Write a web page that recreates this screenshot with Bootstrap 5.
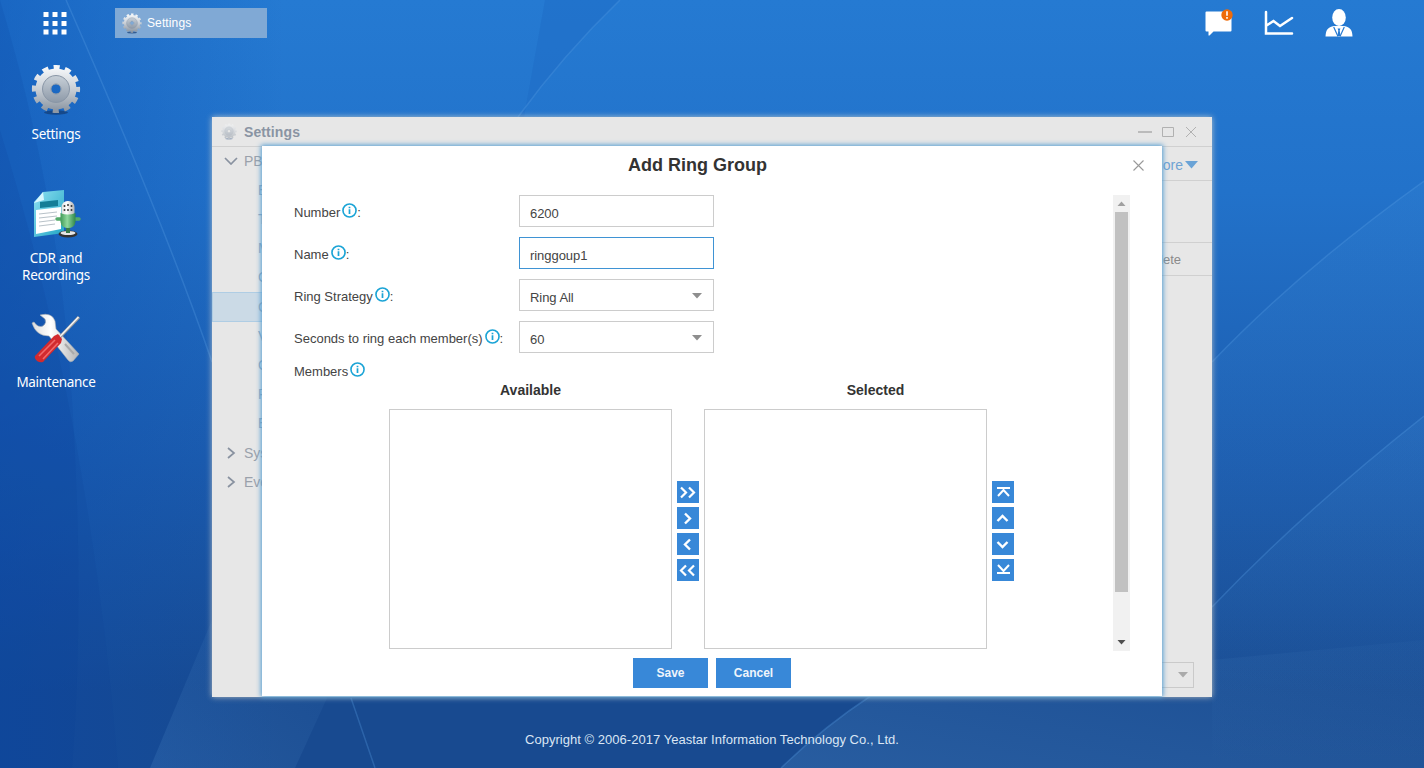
<!DOCTYPE html>
<html lang="en">
<head>
<meta charset="utf-8">
<title>Yeastar Settings</title>
<link href="https://cdn.jsdelivr.net/npm/bootstrap@5.3.0/dist/css/bootstrap.min.css" rel="stylesheet">
<script src="https://cdn.jsdelivr.net/npm/bootstrap@5.3.0/dist/js/bootstrap.bundle.min.js" defer></script>
<style>
body{font-family:"Liberation Sans",Arial,sans-serif;font-size:13px;line-height:20px;color:#444;background:#1c5fb4;width:1424px;height:768px}
.wallpaper{left:0;top:0;width:1424px;height:768px;z-index:-1}
.topbar{height:46px}
.apps-btn{margin-left:43px;width:25px;height:46px}
.task-btn{margin-left:47px;width:152px;height:30px;background:#80a9d5;color:#fff;padding-left:7px;gap:5px;font-size:12px;letter-spacing:.12px}
.tray{margin-right:70px;gap:30px}
.desk-icons{width:112px;margin-top:18px}
.desk-item{height:124px;color:#fff;font-family:"Noto Sans",sans-serif;font-size:13.5px;line-height:17px;letter-spacing:-.3px}
.desk-item svg{margin-bottom:10px}
.app-win{left:212px;top:117px;width:1000px;height:580px;background:#e7e7e7;box-shadow:0 0 6px rgba(225,220,205,.75);color:#9aa1ab}
.win-head{height:30px;border-bottom:1px solid #d0d0d0;padding:0 14px 0 9px}
.win-title{font-size:14px;font-weight:700;color:#8a94a3;letter-spacing:.1px}
.win-icon{margin-right:7px}
.side{width:182px;font-size:14px}
.side-row{height:29px;padding-left:12px;gap:6px}
.side-row.open{padding-bottom:2px}
.side-sub{height:29px;padding-left:46px;line-height:29px;color:#93a9bd}
.side-sub.on{height:30px;background:#cbdae6;border:1px solid #afcde4;padding-left:45px}
.pane{height:550px}
.pane-tools{height:34px;border-bottom:1px solid #d0d0d0;padding:2px 14px 0 0;font-size:14px;color:#6fa3d4;gap:2px}
.pane-gap{height:62px;border-bottom:1px solid #d0d0d0}
.pane-cols{height:33px;border-bottom:1px solid #d0d0d0;padding:2px 31px 0 0;color:#8a8a8a}
.pager{width:60px;height:26px;border:1px solid #cacaca;margin:0 18px 9px auto;padding-right:5px}
.dialog{left:50px;top:29px;width:900px;height:550px;background:#fff;box-shadow:0 0 5px 1px #4f9ad0;color:#444}
.dialog-head{height:38px;font-size:18px;font-weight:700;color:#333;padding-right:29px}
.dialog-x{right:18px;top:14px;line-height:0}
.dialog-body{height:466px;padding:11px 32px 0}
.field-row{height:32px;margin-bottom:10px}
.field-label{width:225px;padding-top:4px;white-space:nowrap}
.info{margin:0 0 6px 2px}
.field-box{width:195px;height:32px;border:1px solid #ccc;border-radius:0;padding:5px 10px 0;font-size:13px;color:#444;line-height:20px;background:#fff;letter-spacing:-.05px}
.field-box.active{border-color:#3f93d4}
.caret{margin-bottom:2px}
.members-label{height:37px;gap:2px}
.members-label .info{margin:0 0 4px}
.members{margin-left:95px}
.list-head{width:283px;height:19px;text-align:center;font-weight:700;font-size:14px;color:#333;line-height:0}
.list-head.shifted{padding-left:60px}
.list-pane{width:283px;height:240px;border:1px solid #ccc}
.move-col{width:32px;padding:23px 5px 0;gap:4px}
.move-btn{width:22px;height:22px;background:#3888d8;border:0;padding:0;line-height:0}
.vbar{width:17px;height:456px;background:#f1f1f1}
.vbar-thumb{width:13px;height:380px;background:#c1c1c1}
.vbar-end{height:17px}
.act{width:75px;height:30px;background:#3888d8;color:#eef4fb;border:0;border-radius:0;padding:0;font-size:12px;font-weight:700;line-height:30px}
.foot{top:730px;left:0;width:1424px;color:#dbe6f4;text-align:center;letter-spacing:.03px}
</style>
</head>
<body class="position-relative overflow-hidden">
<svg class="wallpaper position-absolute" viewBox="0 0 1424 768" preserveAspectRatio="none">
  <defs>
    <linearGradient id="sky" x1="0" y1="0" x2="0" y2="1"><stop offset="0" stop-color="#257ad2"/><stop offset=".25" stop-color="#2272ca"/><stop offset=".6" stop-color="#1c5cae"/><stop offset=".9" stop-color="#184a90"/><stop offset="1" stop-color="#184a90"/></linearGradient>
    <linearGradient id="edge" x1="0" y1="0" x2="1" y2="0"><stop offset="0" stop-color="#0a4cae" stop-opacity=".42"/><stop offset=".2" stop-color="#0a4cae" stop-opacity="0"/></linearGradient>
    <linearGradient id="ray" x1="1" y1="0" x2="0" y2="1"><stop offset="0" stop-color="#4f8bc8" stop-opacity=".05"/><stop offset="1" stop-color="#4f8bc8" stop-opacity=".32"/></linearGradient>
    <linearGradient id="glow" x1="0" y1="0" x2="0" y2="1"><stop offset="0" stop-color="#4f9be0" stop-opacity=".13"/><stop offset="1" stop-color="#4f9be0" stop-opacity="0"/></linearGradient>
    <linearGradient id="metal" x1="0" y1="0" x2="0" y2="1"><stop offset="0" stop-color="#f4f6f8"/><stop offset=".5" stop-color="#c9cfd6"/><stop offset="1" stop-color="#8f99a5"/></linearGradient>
    <linearGradient id="metal2" x1="0" y1="0" x2="0" y2="1"><stop offset="0" stop-color="#c8d0d8"/><stop offset="1" stop-color="#8d99a8"/></linearGradient>
    <linearGradient id="paper" x1="0" y1="0" x2="1" y2="1"><stop offset="0" stop-color="#8fe0f2"/><stop offset="1" stop-color="#20a5c4"/></linearGradient>
    <linearGradient id="green" x1="0" y1="0" x2="1" y2="0"><stop offset="0" stop-color="#3f9a58"/><stop offset=".45" stop-color="#8fd89c"/><stop offset="1" stop-color="#2f8749"/></linearGradient>
    <linearGradient id="steel" x1="0" y1="0" x2="1" y2="0"><stop offset="0" stop-color="#ddd"/><stop offset=".4" stop-color="#fff"/><stop offset="1" stop-color="#b4b4b4"/></linearGradient>
    <symbol id="gear" viewBox="0 0 50 52">
      <ellipse cx="25" cy="48.500" rx="12" ry="2.200" fill="#123c74" opacity=".7"/>
      <circle cx="25" cy="25" r="20.600" fill="none" stroke="url(#metal)" stroke-width="7" stroke-dasharray="5.800 4.986" stroke-dashoffset="2.900"/>
      <path fill-rule="evenodd" fill="url(#metal)" d="M25 4.500a20.500 20.500 0 1 0 .01 0ZM25 20a5 5 0 1 1-.01 0Z"/>
      <path fill-rule="evenodd" fill="url(#metal2)" stroke="#8996a6" d="M25 11.500a13.500 13.500 0 1 0 .01 0ZM25 20a5 5 0 1 1-.01 0Z"/>
    </symbol>
    <symbol id="info" viewBox="0 0 14 14"><circle cx="7" cy="7" r="6.100" fill="none" stroke="#1ba4d6" stroke-width="1.500"/><path d="M7 5.800v4.500M7 3.500v1.500" stroke="#1ba4d6" stroke-width="1.600"/></symbol>
    <symbol id="cross" viewBox="0 0 11 11"><path d="M.5.5l10 10M10.500.5l-10 10" stroke="#999" stroke-width="1.100"/></symbol>
  </defs>
  <path fill="url(#sky)" d="M0 0h1424v768H0z"/>
  <path fill="url(#edge)" d="M0 0h1424v768H0z"/>
  <path fill="#1d6bc6" opacity=".5" d="M545 0H620Q563 55 518 117H524Z"/>
  <path fill="url(#glow)" d="M1424 181Q1300 270 1212 362V768h212Z"/>
  <path fill="url(#glow)" d="M1424 416Q1305 510 1212 607V768h212Z"/>
  <path fill="url(#ray)" opacity=".9" d="M1424 640V768H781Q822 728 872 695L1212 660Z"/>
  <path fill="url(#ray)" opacity=".7" d="M212 620L327 698L295 768H150Z"/>
  <path fill="#0b3d92" opacity=".14" d="M0 130Q90 420 118 768H0Z"/>
  <path fill="#0b3d92" opacity=".12" d="M0 0Q60 200 72 400Q85 600 72 768H0Z"/>
  <path fill="none" stroke="#5aa0e4" stroke-opacity=".3" stroke-width="1.500" d="M66 0Q165 225 212 362M351 698L375 768M620 0Q563 55 518 117M1424 181Q1300 270 1212 362M1424 416Q1305 510 1212 607M872 695Q822 728 781 768"/>
</svg>

<header class="topbar d-flex align-items-center">
  <a class="apps-btn d-block" href="#"><svg width="25" height="46" viewBox="0 0 25 46" fill="#fff"><path d="M.5 12h5v5h-5zM9.500 12h5v5h-5zM18.500 12h5v5h-5zM.5 21h5v5h-5zM9.500 21h5v5h-5zM18.500 21h5v5h-5zM.5 29.500h5v5h-5zM9.500 29.500h5v5h-5zM18.500 29.500h5v5h-5z"/></svg></a>
  <div class="task-btn d-flex align-items-center"><svg width="20" height="21"><use href="#gear"/></svg><span>Settings</span></div>
  <div class="tray d-flex align-items-center ms-auto">
    <svg width="30" height="28" viewBox="0 0 30 28"><path fill="#fff" d="M2.500 2.500h24q1 0 1 1v18q0 1-1 1H9.500l-4 4h-1v-4h-2q-1 0-1-1v-18q0-1 1-1z"/><circle cx="23" cy="6" r="5.700" fill="#ee6b0a"/><path d="M23 2.300v4.500M23 8v1.700" stroke="#fff" stroke-width="1.600"/></svg>
    <svg width="30" height="28" viewBox="0 0 30 28" fill="none" stroke="#fff" stroke-width="2.500" stroke-linecap="round"><path d="M2 3v21.500h26M2.500 16.500l7-4.500 6.500 5L28 9"/></svg>
    <svg width="30" height="28" viewBox="0 0 30 28"><ellipse cx="15" cy="8.500" rx="6.800" ry="8.500" fill="#fff"/><path fill="#fff" d="M1.500 27.500c.5-7 2-9 8.500-10.500h10c6.500 1.500 8 3.500 8.500 10.500Z"/><path d="M9.700 18L14 27.500M20.300 18L16 27.500" stroke="#277bd3" stroke-width="1.200"/><path fill="#277bd3" d="M13.600 19.500h2.800l-.7 2 .8 5.500h-3l.8-5.500z"/></svg>
  </div>
</header>

<nav class="desk-icons d-flex flex-column">
  <div class="desk-item d-flex flex-column align-items-center text-center"><svg width="50" height="52"><use href="#gear"/></svg><span>Settings</span></div>
  <div class="desk-item d-flex flex-column align-items-center text-center">
    <svg width="50" height="52" viewBox="0 0 50 52"><path fill="url(#paper)" d="M12 4L33 2V45L3 49V14Z"/><path fill="#157e97" d="M9 14l18-2v6L9 20Z"/><path fill="#fff" d="M5 22l25-3v22L5 46Z"/><path fill="#d8f7ff" d="M12 4l1 8-10 3Z"/><path d="M8 26l18-2M8 30l18-2M8 34l16-2M8 38l16-2" stroke="#b8c2c8"/><ellipse cx="37" cy="46" rx="9.500" ry="3.500" fill="#333"/><ellipse cx="37" cy="45" rx="7.500" ry="2" fill="#e6e6e6"/><path d="M37 38v7" stroke="#397b49" stroke-width="4"/><path d="M26 31h22" fill="none" stroke="#54aa6a" stroke-width="3.500" stroke-linecap="round"/><rect x="30.500" y="13" width="13" height="18" rx="6" fill="url(#steel)"/><path d="M33.500 17v2M37 16v2M40.500 17v2M33.500 21v2M37 21v2M40.500 21v2" stroke="#444" stroke-width="1.600"/><path fill="url(#green)" d="M29.500 25q7 3 15 0v9q-1 6-7.500 6t-7.500-6z"/></svg>
    <span>CDR and<br>Recordings</span></div>
  <div class="desk-item d-flex flex-column align-items-center text-center">
    <svg width="50" height="52" viewBox="0 0 50 52"><path fill="url(#steel)" stroke="#a6acb3" stroke-width=".6" d="M1 11l2-1q4 6 9 4 4-3 2-7L9 3Q21 0 24 9l1 8L48 42l-6 7q-3 2-5-1L18 24Q5 24 1 11Z"/><path d="M34 32l9 10" stroke="#aaa" stroke-width="2"/><path d="M28 26L48 5" stroke="#9b9b9b" stroke-width="3.200"/><path d="M28 25.500L47.500 5" stroke="#f5f5f5" stroke-width="1.500"/><path fill="#d22a2e" d="M23 24l4-2 4 5-1 4L12 50q-3 1-6-1-3-3-2-5Z"/><path d="M24 28L8 44M27 31L12 47" stroke="#f06a6a" stroke-width="1.600"/></svg>
    <span>Maintenance</span></div>
</nav>

<section class="app-win position-absolute">
  <div class="win-head d-flex align-items-center">
    <svg class="opacity-50 win-icon" width="16" height="17"><use href="#gear"/></svg><span class="win-title">Settings</span>
    <div class="ms-auto d-flex align-items-center"><svg width="60" height="12" viewBox="0 0 60 12" fill="none" stroke="#b1b1b1"><path d="M0 6h14" stroke-width="1.600"/><path d="M24.500 1.500h11v9h-11z"/><path d="M48 1l10 10M58 1L48 11"/></svg></div>
  </div>
  <div class="d-flex">
    <div class="side">
      <div class="side-row open d-flex align-items-center"><svg width="14" height="8" fill="none" stroke="#8992a0" stroke-width="1.700"><path d="M1 1l6 6 6-6"/></svg>PBX</div>
      <div class="side-sub">Ext</div>
      <div class="side-sub">Trunk</div>
      <div class="side-sub">Multi</div>
      <div class="side-sub">Call</div>
      <div class="side-sub on">Call</div>
      <div class="side-sub">Voice</div>
      <div class="side-sub">Gen</div>
      <div class="side-sub">Rec</div>
      <div class="side-sub">Em</div>
      <div class="side-row d-flex align-items-center"><svg width="14" height="12" fill="none" stroke="#8992a0" stroke-width="1.700"><path d="M4 1l6 5-6 5"/></svg>System</div>
      <div class="side-row d-flex align-items-center"><svg width="14" height="12" fill="none" stroke="#8992a0" stroke-width="1.700"><path d="M4 1l6 5-6 5"/></svg>Event</div>
    </div>
    <div class="pane flex-grow-1 d-flex flex-column">
      <div class="pane-tools d-flex align-items-center justify-content-end">More<svg width="13" height="8" fill="#6aa3d6"><path d="M0 0h13L6.500 7.500z"/></svg></div>
      <div class="pane-gap"></div>
      <div class="pane-cols d-flex align-items-center justify-content-end">Delete</div>
      <div class="mt-auto pager d-flex align-items-center justify-content-end"><svg width="10" height="6" fill="#aaa"><path d="M0 0h10L5 5.500z"/></svg></div>
    </div>
  </div>

  <div class="dialog position-absolute">
    <div class="dialog-head d-flex align-items-center justify-content-center">Add Ring Group</div>
    <a href="#" class="dialog-x position-absolute"><svg width="11" height="11"><use href="#cross"/></svg></a>
    <div class="dialog-body d-flex justify-content-between">
      <div>
        <div class="field-row d-flex"><label class="field-label d-flex align-items-center">Number<svg class="info" width="15" height="15"><use href="#info"/></svg>:</label><div class="field-box d-flex align-items-center">6200</div></div>
        <div class="field-row d-flex"><label class="field-label d-flex align-items-center">Name<svg class="info" width="15" height="15"><use href="#info"/></svg>:</label><div class="field-box active d-flex align-items-center">ringgoup1</div></div>
        <div class="field-row d-flex"><label class="field-label d-flex align-items-center">Ring Strategy<svg class="info" width="15" height="15"><use href="#info"/></svg>:</label><div class="field-box d-flex align-items-center justify-content-between">Ring All<svg class="caret" width="12" height="7" fill="#8e8e8e"><path d="M1 0h10L6 5.500z"/></svg></div></div>
        <div class="field-row d-flex mb-0"><label class="field-label d-flex align-items-center">Seconds to ring each member(s)<svg class="info" width="15" height="15"><use href="#info"/></svg>:</label><div class="field-box d-flex align-items-center justify-content-between">60<svg class="caret" width="12" height="7" fill="#8e8e8e"><path d="M1 0h10L6 5.500z"/></svg></div></div>
        <div class="members-label d-flex align-items-center">Members<svg class="info" width="15" height="15"><use href="#info"/></svg></div>
        <div class="members d-flex">
          <div><div class="list-head">Available</div><div class="list-pane"></div></div>
          <div class="move-col d-flex flex-column justify-content-center">
            <button class="move-btn"><svg width="22" height="22" fill="none" stroke="#fff" stroke-width="2.200"><path d="M4 6.500l5 5-5 5M12 6.500l5 5-5 5"/></svg></button>
            <button class="move-btn"><svg width="22" height="22" fill="none" stroke="#fff" stroke-width="2.400"><path d="M8 6.500l5 5-5 5"/></svg></button>
            <button class="move-btn"><svg width="22" height="22" fill="none" stroke="#fff" stroke-width="2.400"><path d="M13 6.500l-5 5 5 5"/></svg></button>
            <button class="move-btn"><svg width="22" height="22" fill="none" stroke="#fff" stroke-width="2.200"><path d="M9 6.500l-5 5 5 5M17 6.500l-5 5 5 5"/></svg></button>
          </div>
          <div><div class="list-head shifted">Selected</div><div class="list-pane"></div></div>
          <div class="move-col d-flex flex-column justify-content-center">
            <button class="move-btn"><svg width="22" height="22" fill="none" stroke="#fff" stroke-width="2"><path d="M5 7h13M6 15l5.500-6 5.500 6"/></svg></button>
            <button class="move-btn"><svg width="22" height="22" fill="none" stroke="#fff" stroke-width="2.400"><path d="M5.500 14l5-5 5 5"/></svg></button>
            <button class="move-btn"><svg width="22" height="22" fill="none" stroke="#fff" stroke-width="2.400"><path d="M5.500 9l5 5 5-5"/></svg></button>
            <button class="move-btn"><svg width="22" height="22" fill="none" stroke="#fff" stroke-width="2"><path d="M5 14h13M6 6l5.500 6L17 6"/></svg></button>
          </div>
        </div>
      </div>
      <div class="vbar d-flex flex-column align-items-center">
        <svg class="vbar-end" width="17" height="17"><path fill="#a0a0a0" d="M4.500 11h8l-4-4.500z"/></svg>
        <div class="vbar-thumb"></div>
        <svg class="vbar-end mt-auto" width="17" height="17"><path fill="#505050" d="M4.500 6h8l-4 4.500z"/></svg>
      </div>
    </div>
    <div class="d-flex justify-content-center gap-2 pt-2"><button class="act btn">Save</button><button class="act btn">Cancel</button></div>
  </div>
</section>

<footer class="foot position-absolute">Copyright © 2006-2017 Yeastar Information Technology Co., Ltd.</footer>
</body>
</html>
